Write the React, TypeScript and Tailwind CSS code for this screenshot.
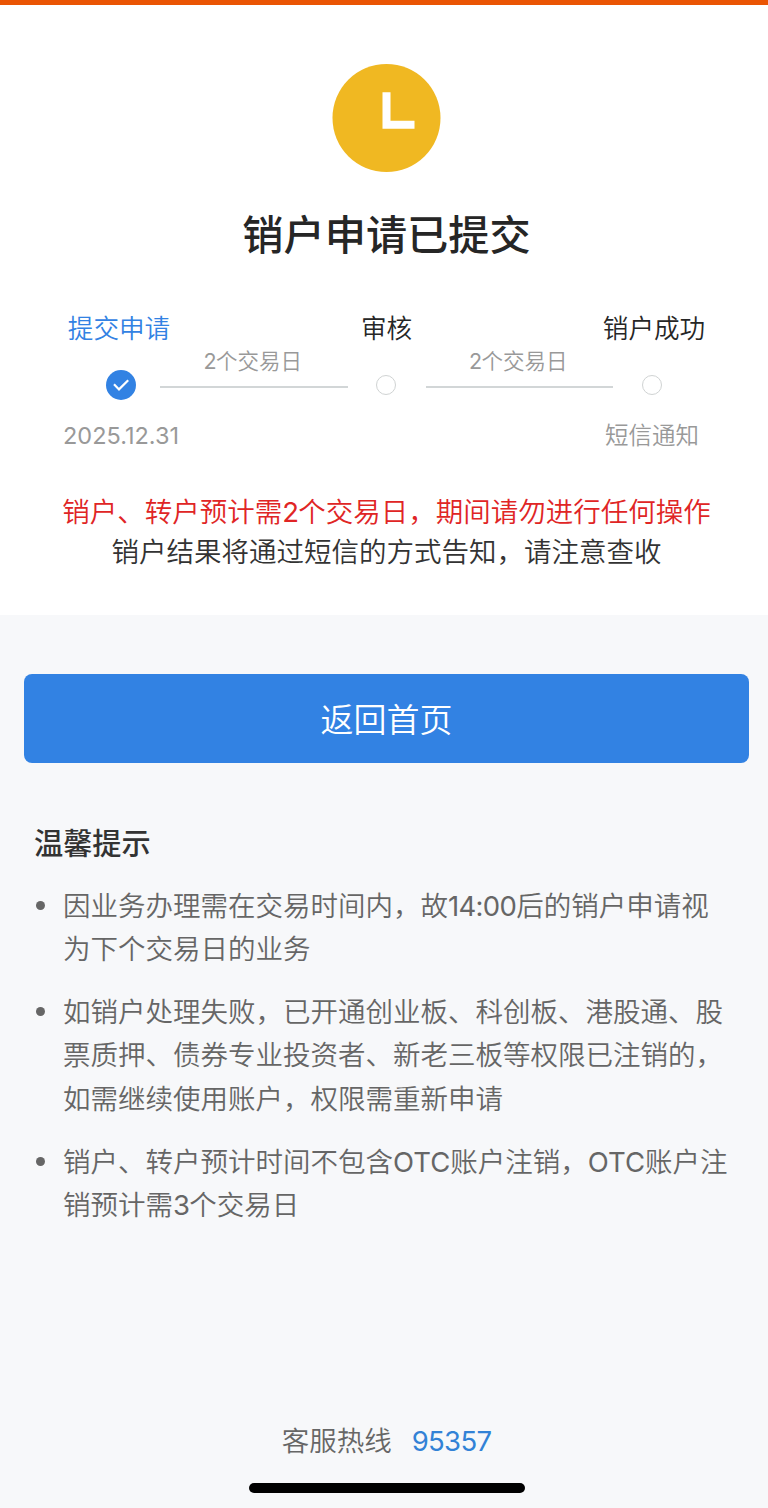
import React from 'react';

type Step = {
  title: string;
  note?: string;
  done?: boolean;
};

const steps: Step[] = [
  { title: '提交申请', note: '2025.12.31', done: true },
  { title: '审核' },
  { title: '销户成功', note: '短信通知' },
];

const tips: string[][] = [
  ['因业务办理需在交易时间内，故14:00后的销户申请视', '为下个交易日的业务'],
  [
    '如销户处理失败，已开通创业板、科创板、港股通、股',
    '票质押、债券专业投资者、新老三板等权限已注销的，',
    '如需继续使用账户，权限需重新申请',
  ],
  ['销户、转户预计时间不包含OTC账户注销，OTC账户注', '销预计需3个交易日'],
];

// Inter needs the regular weight to look even with the Chinese text, digits are tightened a bit
const Mixed: React.FC<{ text: string }> = ({ text }) => (
  <>
    {text.split(/([A-Z]+|[0-9:.]+)/).map((part, i) =>
      i % 2 === 1 ? (
        <span key={i} className={/[A-Z]/.test(part) ? 'font-normal' : 'font-normal tracking-[-0.025em]'}>
          {part}
        </span>
      ) : (
        part
      )
    )}
  </>
);

const ClockIcon = () => (
  <svg className="mt-[59px] h-[108px] w-[109px]" viewBox="0 0 109 108" fill="none">
    <circle cx="54.5" cy="54" r="54" fill="#f0b822" />
    <path d="M54.5 28.3V60.8H82.5" stroke="#fff" strokeWidth="8" />
  </svg>
);

const StepDot: React.FC<{ done?: boolean }> = ({ done }) =>
  done ? (
    <svg className="h-[30px] w-[30px]" viewBox="0 0 30 30" fill="none">
      <circle cx="15" cy="15" r="15" fill="#3282e3" />
      <path d="M8 14.3L13 19.4L22.2 10.3" stroke="#fff" strokeWidth="2.2" />
    </svg>
  ) : (
    <span className="mr-px h-5 w-5 rounded-full border border-[#d0d3d3] bg-white" />
  );

const Connector = () => (
  <div className="flex flex-1 flex-col items-center pt-9">
    <div className="mr-[2px] h-7 text-[21.5px] leading-7 whitespace-nowrap text-[#999]">
      <Mixed text="2个交易日" />
    </div>
    <div className="mt-[11px] h-[2px] w-full bg-[#d2d6d7]" />
  </div>
);

const titleShift = ['-translate-x-[2px]', '', 'translate-x-[2px]'];

const App: React.FC = () => {
  return (
    <div className="flex h-[1508px] w-[768px] flex-col overflow-hidden bg-[#f7f8fa] font-[Inter,'Noto_Sans_CJK_SC',sans-serif] font-[350]">
      <div className="h-[5px] bg-[#ea5504]" />

      <section className="flex h-[610px] flex-col items-center bg-white pl-[5px]">
        <ClockIcon />
        <h1 className="mt-[33px] text-[41.2px] leading-[60px] font-medium text-[#262626]">销户申请已提交</h1>

        <div className="mt-[46px] flex w-[609px]">
          {steps.map((step, i) => (
            <React.Fragment key={step.title}>
              {i > 0 && <Connector />}
              <div className="flex w-[78px] flex-col items-center whitespace-nowrap">
                <div
                  className={`h-9 text-[25.6px] leading-9 ${titleShift[i]} ${step.done ? 'text-[#3282e3]' : 'text-[#262626]'}`}
                >
                  {step.title}
                </div>
                <div className="mt-[18px] flex h-10 items-center">
                  <StepDot done={step.done} />
                </div>
                <div className="mt-[15px] h-8 text-[23.5px] leading-8 text-[#999]">
                  {/[0-9]/.test(step.note ?? '') ? <span className="font-normal">{step.note}</span> : step.note}
                </div>
              </div>
            </React.Fragment>
          ))}
        </div>

        <div className="mt-[41px] text-center text-[27.5px] leading-[39.5px] whitespace-nowrap">
          <p className="text-[#e02525]">
            <Mixed text="销户、转户预计需2个交易日，期间请勿进行任何操作" />
          </p>
          <p className="text-[#333]">销户结果将通过短信的方式告知，请注意查收</p>
        </div>
      </section>

      <button className="mt-[59px] mr-[19px] ml-6 h-[89px] shrink-0 rounded-lg bg-[#3282e3] pt-[4px] text-[33px] text-white">
        返回首页
      </button>

      <section className="mt-[59px] pl-[34px]">
        <h2 className="text-[29.2px] leading-[44px] font-medium text-[#333]">温馨提示</h2>
        <ul className="mt-[19px] flex flex-col gap-[19.6px] text-[27.5px] leading-[43.3px] whitespace-nowrap text-[#666]">
          {tips.map((lines) => (
            <li key={lines[0]} className="flex">
              <span className="mt-4 mr-[18px] ml-[2px] h-[9px] w-[9px] rounded-full bg-[#666]" />
              <div>
                {lines.map((line) => (
                  <p key={line}>
                    <Mixed text={line} />
                  </p>
                ))}
              </div>
            </li>
          ))}
        </ul>
      </section>

      <footer className="mt-auto flex flex-col items-center pb-[15px] pl-[5px]">
        <div className="flex gap-5 text-[27.5px] leading-10 text-[#666]">
          <span>客服热线</span>
          <a className="text-[#3282d6]">
            <Mixed text="95357" />
          </a>
        </div>
        <div className="mt-[22px] h-[10px] w-[276px] rounded-full bg-black" />
      </footer>
    </div>
  );
};

export default App;
